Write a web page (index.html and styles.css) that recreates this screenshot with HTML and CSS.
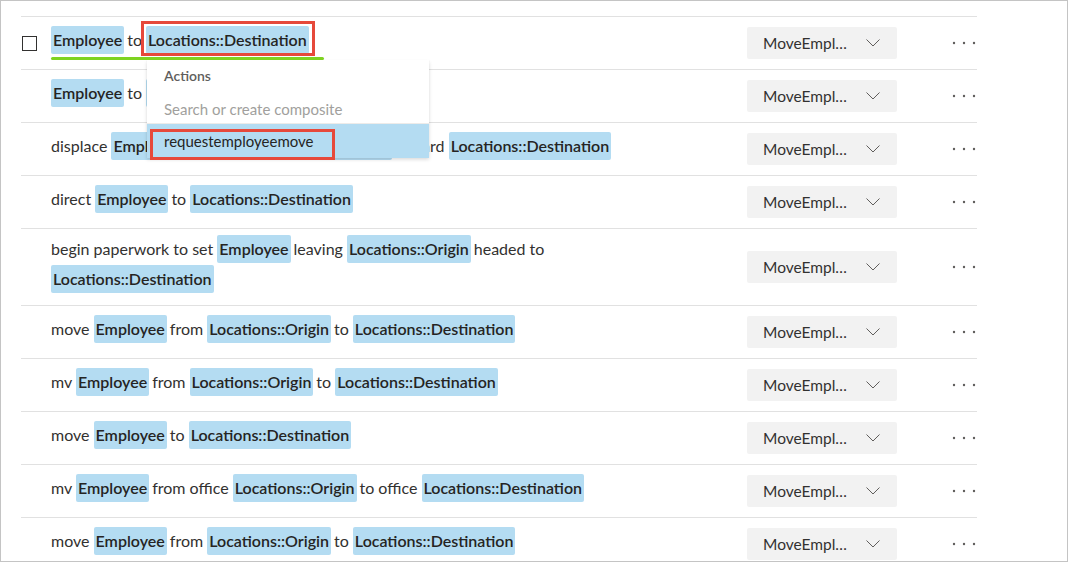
FILE: index.html
```html
<!DOCTYPE html>
<html lang="en">
<head>
<meta charset="utf-8">
<title>Utterances</title>
<link rel="stylesheet" href="styles.css">
</head>
<body>
<div class="frame">
  <div class="list">
    <div class="row">
      <div class="check-cell"><span class="checkbox"></span></div>
      <div class="utter">
        <span class="utter-line active"><span class="chip">Employee</span>to <span class="chip marked">Locations::Destination</span></span>
      </div>
      <div class="intent"><div class="select"><span class="select-text">MoveEmpl…</span><svg class="chev" width="14" height="8" viewBox="0 0 14 8"><polyline points="0.5,0.5 7,7 13.5,0.5" fill="none" stroke="#605e5c" stroke-width="1"/></svg></div></div>
      <div class="more"><svg width="24" height="4" viewBox="0 0 24 4"><circle cx="2" cy="2" r="1.2"/><circle cx="12" cy="2" r="1.2"/><circle cx="22" cy="2" r="1.2"/></svg></div>
    </div>
    <div class="row">
      <div class="check-cell"></div>
      <div class="utter"><span class="chip">Employee</span>to <span class="chip">Locations::Destination</span></div>
      <div class="intent"><div class="select"><span class="select-text">MoveEmpl…</span><svg class="chev" width="14" height="8" viewBox="0 0 14 8"><polyline points="0.5,0.5 7,7 13.5,0.5" fill="none" stroke="#605e5c" stroke-width="1"/></svg></div></div>
      <div class="more"><svg width="24" height="4" viewBox="0 0 24 4"><circle cx="2" cy="2" r="1.2"/><circle cx="12" cy="2" r="1.2"/><circle cx="22" cy="2" r="1.2"/></svg></div>
    </div>
    <div class="row">
      <div class="check-cell"></div>
      <div class="utter">displace <span class="chip">Employee</span>from office <span class="chip">Locations::Origin</span>toward <span class="chip">Locations::Destination</span></div>
      <div class="intent"><div class="select"><span class="select-text">MoveEmpl…</span><svg class="chev" width="14" height="8" viewBox="0 0 14 8"><polyline points="0.5,0.5 7,7 13.5,0.5" fill="none" stroke="#605e5c" stroke-width="1"/></svg></div></div>
      <div class="more"><svg width="24" height="4" viewBox="0 0 24 4"><circle cx="2" cy="2" r="1.2"/><circle cx="12" cy="2" r="1.2"/><circle cx="22" cy="2" r="1.2"/></svg></div>
    </div>
    <div class="row">
      <div class="check-cell"></div>
      <div class="utter">direct <span class="chip">Employee</span>to <span class="chip">Locations::Destination</span></div>
      <div class="intent"><div class="select"><span class="select-text">MoveEmpl…</span><svg class="chev" width="14" height="8" viewBox="0 0 14 8"><polyline points="0.5,0.5 7,7 13.5,0.5" fill="none" stroke="#605e5c" stroke-width="1"/></svg></div></div>
      <div class="more"><svg width="24" height="4" viewBox="0 0 24 4"><circle cx="2" cy="2" r="1.2"/><circle cx="12" cy="2" r="1.2"/><circle cx="22" cy="2" r="1.2"/></svg></div>
    </div>
    <div class="row">
      <div class="check-cell"></div>
      <div class="utter">begin paperwork to set <span class="chip">Employee</span>leaving <span class="chip">Locations::Origin</span>headed to <span class="chip">Locations::Destination</span></div>
      <div class="intent"><div class="select"><span class="select-text">MoveEmpl…</span><svg class="chev" width="14" height="8" viewBox="0 0 14 8"><polyline points="0.5,0.5 7,7 13.5,0.5" fill="none" stroke="#605e5c" stroke-width="1"/></svg></div></div>
      <div class="more"><svg width="24" height="4" viewBox="0 0 24 4"><circle cx="2" cy="2" r="1.2"/><circle cx="12" cy="2" r="1.2"/><circle cx="22" cy="2" r="1.2"/></svg></div>
    </div>
    <div class="row">
      <div class="check-cell"></div>
      <div class="utter">move <span class="chip">Employee</span>from <span class="chip">Locations::Origin</span>to <span class="chip">Locations::Destination</span></div>
      <div class="intent"><div class="select"><span class="select-text">MoveEmpl…</span><svg class="chev" width="14" height="8" viewBox="0 0 14 8"><polyline points="0.5,0.5 7,7 13.5,0.5" fill="none" stroke="#605e5c" stroke-width="1"/></svg></div></div>
      <div class="more"><svg width="24" height="4" viewBox="0 0 24 4"><circle cx="2" cy="2" r="1.2"/><circle cx="12" cy="2" r="1.2"/><circle cx="22" cy="2" r="1.2"/></svg></div>
    </div>
    <div class="row">
      <div class="check-cell"></div>
      <div class="utter">mv <span class="chip">Employee</span>from <span class="chip">Locations::Origin</span>to <span class="chip">Locations::Destination</span></div>
      <div class="intent"><div class="select"><span class="select-text">MoveEmpl…</span><svg class="chev" width="14" height="8" viewBox="0 0 14 8"><polyline points="0.5,0.5 7,7 13.5,0.5" fill="none" stroke="#605e5c" stroke-width="1"/></svg></div></div>
      <div class="more"><svg width="24" height="4" viewBox="0 0 24 4"><circle cx="2" cy="2" r="1.2"/><circle cx="12" cy="2" r="1.2"/><circle cx="22" cy="2" r="1.2"/></svg></div>
    </div>
    <div class="row">
      <div class="check-cell"></div>
      <div class="utter">move <span class="chip">Employee</span>to <span class="chip">Locations::Destination</span></div>
      <div class="intent"><div class="select"><span class="select-text">MoveEmpl…</span><svg class="chev" width="14" height="8" viewBox="0 0 14 8"><polyline points="0.5,0.5 7,7 13.5,0.5" fill="none" stroke="#605e5c" stroke-width="1"/></svg></div></div>
      <div class="more"><svg width="24" height="4" viewBox="0 0 24 4"><circle cx="2" cy="2" r="1.2"/><circle cx="12" cy="2" r="1.2"/><circle cx="22" cy="2" r="1.2"/></svg></div>
    </div>
    <div class="row">
      <div class="check-cell"></div>
      <div class="utter">mv <span class="chip">Employee</span>from office <span class="chip">Locations::Origin</span>to office <span class="chip">Locations::Destination</span></div>
      <div class="intent"><div class="select"><span class="select-text">MoveEmpl…</span><svg class="chev" width="14" height="8" viewBox="0 0 14 8"><polyline points="0.5,0.5 7,7 13.5,0.5" fill="none" stroke="#605e5c" stroke-width="1"/></svg></div></div>
      <div class="more"><svg width="24" height="4" viewBox="0 0 24 4"><circle cx="2" cy="2" r="1.2"/><circle cx="12" cy="2" r="1.2"/><circle cx="22" cy="2" r="1.2"/></svg></div>
    </div>
    <div class="row">
      <div class="check-cell"></div>
      <div class="utter">move <span class="chip">Employee</span>from <span class="chip">Locations::Origin</span>to <span class="chip">Locations::Destination</span></div>
      <div class="intent"><div class="select"><span class="select-text">MoveEmpl…</span><svg class="chev" width="14" height="8" viewBox="0 0 14 8"><polyline points="0.5,0.5 7,7 13.5,0.5" fill="none" stroke="#605e5c" stroke-width="1"/></svg></div></div>
      <div class="more"><svg width="24" height="4" viewBox="0 0 24 4"><circle cx="2" cy="2" r="1.2"/><circle cx="12" cy="2" r="1.2"/><circle cx="22" cy="2" r="1.2"/></svg></div>
    </div>
  </div>

  <div class="popup">
    <div class="popup-title">Actions</div>
    <div class="popup-search">Search or create composite</div>
    <div class="popup-item selected">requestemployeemove</div>
  </div>
</div>
</body>
</html>
```

FILE: styles.css
```css
* { box-sizing: border-box; }

html, body {
  margin: 0;
  padding: 0;
  background: #ffffff;
}

body {
  font-family: "Lato", "Liberation Sans", sans-serif;
  font-size: 15px;
  color: #323130;
}

.frame {
  position: relative;
  width: 1068px;
  height: 562px;
  border: 1px solid #c4c4c4;
  padding: 15px 0 0 20px;
  overflow: hidden;
}

.list {
  width: 956px;
  display: flex;
  flex-direction: column;
}

.row {
  display: flex;
  align-items: center;
  min-height: 53px;
  border-top: 1px solid #e1e1e1;
}

.check-cell {
  flex: 0 0 30px;
  display: flex;
  align-items: center;
  padding-left: 1px;
}

.checkbox {
  display: block;
  width: 15px;
  height: 15px;
  border: 1px solid #323130;
  background: #fff;
}

.utter {
  flex: 1 1 auto;
  min-width: 0;
  margin-right: 39px;
  padding: 5px 0 11px;
  font-size: 16px;
  line-height: 30px;
  color: #323130;
}

.utter-line.active {
  position: relative;
  display: inline-block;
}

.utter-line.active::after {
  content: "";
  position: absolute;
  left: 0;
  right: -12px;
  top: 32px;
  height: 3px;
  border-radius: 2px;
  background: #7ed321;
}

.chip {
  position: relative;
  display: inline-block;
  line-height: 28px;
  padding: 0 2px;
  margin-right: 3px;
  border-radius: 2px;
  background: #b4dcf2;
  color: #252423;
  font-weight: 600;
}

.chip.marked::after {
  content: "";
  position: absolute;
  left: -5px;
  right: -6px;
  top: -5px;
  bottom: -2px;
  border: 3px solid #e6493b;
}

.intent {
  flex: 0 0 150px;
}

.select {
  display: flex;
  align-items: center;
  justify-content: space-between;
  height: 32px;
  padding: 0 17px 0 16px;
  border-radius: 2px;
  background: #f2f2f2;
  color: #323130;
  font-size: 15.5px;
  white-space: nowrap;
}

.chev {
  display: block;
}

.more {
  flex: 0 0 80px;
  display: flex;
  justify-content: flex-end;
  padding-right: 1px;
}

.more svg {
  display: block;
  fill: #605e5c;
}

.popup {
  position: absolute;
  left: 146px;
  top: 59px;
  width: 282px;
  background: #ffffff;
  box-shadow: 0 1.6px 3.6px rgba(0, 0, 0, 0.16), 0 0.3px 0.9px rgba(0, 0, 0, 0.12);
}

.popup-title {
  padding: 6px 17px 0;
  line-height: 20px;
  font-size: 14px;
  font-weight: 600;
  color: #605e5c;
}

.popup-search {
  padding: 13px 17px 4px;
  line-height: 20px;
  color: #a19f9d;
  border-bottom: 1px solid #edebe9;
}

.popup-item {
  position: relative;
  height: 34px;
  line-height: 34px;
  padding: 0 17px;
  color: #252423;
}

.popup-item.selected {
  background: #b4dcf2;
}

.popup-item.selected::after {
  content: "";
  position: absolute;
  left: 3px;
  top: 5px;
  width: 179px;
  height: 25px;
  border: 3px solid #e6493b;
}
```
